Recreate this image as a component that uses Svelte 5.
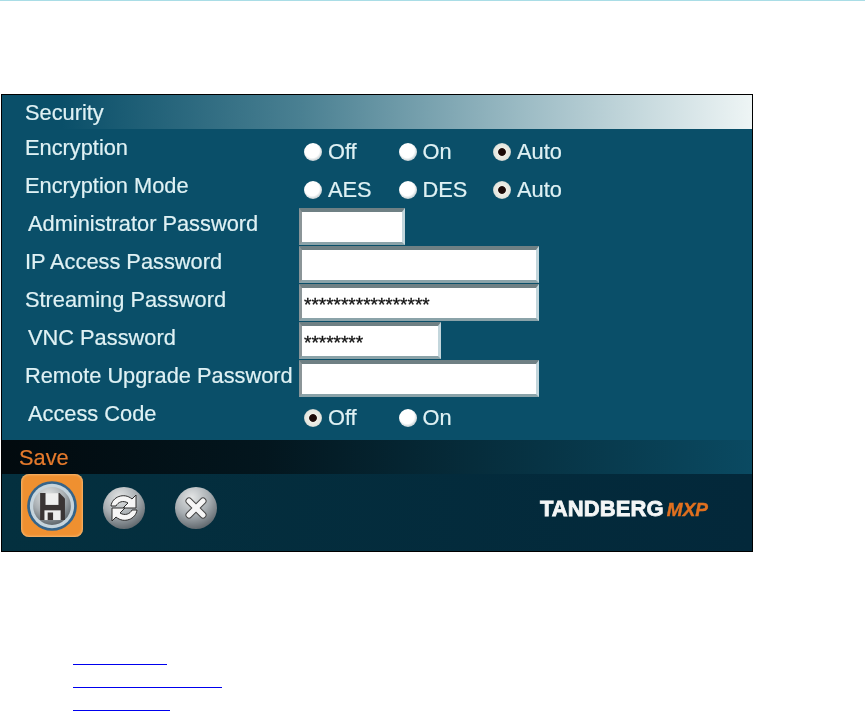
<script>
  const encryption = [
    { label: 'Off', on: false },
    { label: 'On', on: false },
    { label: 'Auto', on: true }
  ];
  const mode = [
    { label: 'AES', on: false },
    { label: 'DES', on: false },
    { label: 'Auto', on: true }
  ];
  const access = [
    { label: 'Off', on: true },
    { label: 'On', on: false }
  ];
  const links = [94, 149, 97];
</script>

{#snippet radios(items)}
  <div class="radios">
    {#each items as item}
      <span class="opt">
        <span class="dot" class:on={item.on}></span>
        <span>{item.label}</span>
      </span>
    {/each}
  </div>
{/snippet}

<div class="topline"></div>

<div class="panel">
  <div class="title">Security</div>
  <div class="form">
    <div class="row">
      <div class="label">Encryption</div>
      {@render radios(encryption)}
    </div>
    <div class="row">
      <div class="label">Encryption Mode</div>
      {@render radios(mode)}
    </div>
    <div class="row">
      <div class="label indent">Administrator Password</div>
      <div class="field" style="width: 106px"></div>
    </div>
    <div class="row">
      <div class="label">IP Access Password</div>
      <div class="field" style="width: 240px"></div>
    </div>
    <div class="row">
      <div class="label">Streaming Password</div>
      <div class="field" style="width: 240px">*****************</div>
    </div>
    <div class="row">
      <div class="label indent">VNC Password</div>
      <div class="field" style="width: 142px">********</div>
    </div>
    <div class="row">
      <div class="label">Remote Upgrade Password</div>
      <div class="field" style="width: 240px"></div>
    </div>
    <div class="row">
      <div class="label indent">Access Code</div>
      {@render radios(access)}
    </div>
  </div>

  <div class="savebar">Save</div>

  <div class="bottom">
    <div class="tools">
      <div class="selected">
        <svg width="54" height="54" viewBox="0 0 50 50">
          <defs>
            <radialGradient id="metal" cx="0.4" cy="0.25" r="0.85">
              <stop offset="0" stop-color="#e4e6e6" />
              <stop offset="0.5" stop-color="#a8aeb2" />
              <stop offset="1" stop-color="#4e565c" />
            </radialGradient>
          </defs>
          <circle cx="25" cy="25" r="23" fill="#35648a" />
          <circle cx="25" cy="25" r="20.5" fill="#c6d4dc" />
          <circle cx="25" cy="25" r="17.5" fill="url(#metal)" />
          <path d="M14 13h18l5 5v20H14z" fill="#3a3434" />
          <path d="M19 13h12v11H19z" fill="#eeeeee" />
          <path d="M18 29h15v9H18z" fill="#eeeeee" />
          <path d="M21 31h5v7h-5z" fill="#3a3434" />
        </svg>
      </div>
      <svg class="round" width="44" height="46" viewBox="0 0 44 46">
        <circle cx="22" cy="23" r="21" fill="url(#metal)" />
        <path d="M9 21c1-9 13-14 21-7l4-4v13H21l5-5c-5-3-10-1-12 3z" fill="#f6f6f6" stroke="#2c2c2c" stroke-width="1" />
        <path d="M35 25c-1 9-13 14-21 7l-4 4V23h13l-5 5c5 3 10 1 12-3z" fill="#f6f6f6" stroke="#2c2c2c" stroke-width="1" />
      </svg>
      <svg class="round" width="44" height="46" viewBox="0 0 44 46">
        <circle cx="22" cy="23" r="21" fill="url(#metal)" />
        <path d="M15 16l14 14M29 16L15 30" stroke="#444" stroke-width="7" stroke-linecap="round" />
        <path d="M15 16l14 14M29 16L15 30" stroke="#f6f6f6" stroke-width="5" stroke-linecap="round" />
      </svg>
    </div>
    <div class="logo">
      <span>TANDBERG</span>
      <em>MXP</em>
    </div>
  </div>
</div>

<ul class="links">
  {#each links as w}
    <li><a href="#top" style="width: {w}px" aria-label="link"></a></li>
  {/each}
</ul>

<style>
  :global(body) {
    margin: 0;
    background: #fff;
    font-family: "Liberation Sans", Arial, sans-serif;
  }

  .topline {
    height: 1px;
    background: #a9dde6;
  }

  .panel {
    width: 750px;
    height: 456px;
    margin: 93px 0 0 1px;
    border: 1px solid #000;
    background: #0a4f69;
    display: flex;
    flex-direction: column;
    color: #dff1f4;
    font-size: 21.8px;
    -webkit-text-stroke: 0.2px #dff1f4;
    filter: blur(0.4px);
  }

  .title {
    height: 34px;
    padding-left: 23px;
    line-height: 35px;
    background: linear-gradient(90deg, #0a4f69 8%, #4a8092 40%, #9dbcc5 70%, #eef5f5 100%);
  }

  .form {
    flex: none;
    height: 311px;
    padding-top: 2px;
    box-sizing: border-box;
  }

  .row {
    height: 38px;
    display: flex;
    align-items: center;
  }

  .radios {
    display: flex;
    margin-left: 5px;
    margin-top: 4px;
  }

  .label {
    width: 297px;
    margin-top: -4px;
    padding-left: 23px;
    box-sizing: border-box;
    white-space: nowrap;
  }

  .label.indent {
    padding-left: 26px;
  }

  .opt {
    width: 94.5px;
    display: flex;
    align-items: center;
    gap: 6px;
  }

  .dot {
    width: 18px;
    height: 18px;
    border-radius: 50%;
    box-sizing: border-box;
    background: radial-gradient(circle at 45% 42%, #fff 50%, #c9d3d6 70%, #33505e 100%);
  }

  .dot.on {
    background: radial-gradient(circle at 50% 50%, #1c0a08 27%, #efeee6 34%, #e4e6df 62%, #56707c 100%);
  }

  .field {
    height: 37px;
    box-sizing: border-box;
    background: #fff;
    border-style: solid;
    border-width: 4px 3px 3px 3px;
    border-color: #6f8084 #c3d6dc #8ba3a9 #8b9598;
    color: #111;
    -webkit-text-stroke: 0.3px #111;
    font-size: 19px;
    line-height: 34px;
    padding-left: 2px;
    overflow: hidden;
    white-space: nowrap;
  }

  .savebar {
    height: 34px;
    flex: none;
    padding-left: 17px;
    line-height: 36px;
    color: #e57a2c;
    -webkit-text-stroke: 0.2px #e57a2c;
    background: linear-gradient(90deg, #020a0e 0%, #03161e 35%, #0a4a62 100%);
  }

  .bottom {
    flex: 1;
    display: flex;
    align-items: flex-start;
    justify-content: space-between;
    background: linear-gradient(90deg, #04303f, #03283a);
    padding-right: 44px;
  }

  .tools {
    display: flex;
    align-items: flex-start;
    margin-left: 19px;
  }

  .selected {
    width: 62px;
    height: 63px;
    margin-right: 19px;
    border-radius: 8px;
    background: #ef9030;
    box-shadow: inset 0 0 3px #ffd9a8;
    display: flex;
    align-items: center;
    justify-content: center;
  }

  .round {
    margin-top: 11px;
  }

  .round + .round {
    margin-left: 28px;
  }

  .logo {
    display: flex;
    align-items: baseline;
    gap: 3px;
    margin-top: 22px;
    font-weight: bold;
    font-size: 22px;
    letter-spacing: 0.1px;
    color: #f4f6f6;
    -webkit-text-stroke: 0.8px #f4f6f6;
    white-space: nowrap;
  }

  .logo em {
    color: #e0701f;
    -webkit-text-stroke: 0.4px #e0701f;
    font-size: 19px;
    letter-spacing: 0;
  }

  .links {
    list-style: none;
    margin: 0;
    padding: 94px 0 0 73px;
  }

  .links li {
    height: 23px;
  }

  .links a {
    display: block;
    height: 18px;
    border-bottom: 1px solid #0000ee;
  }
</style>
